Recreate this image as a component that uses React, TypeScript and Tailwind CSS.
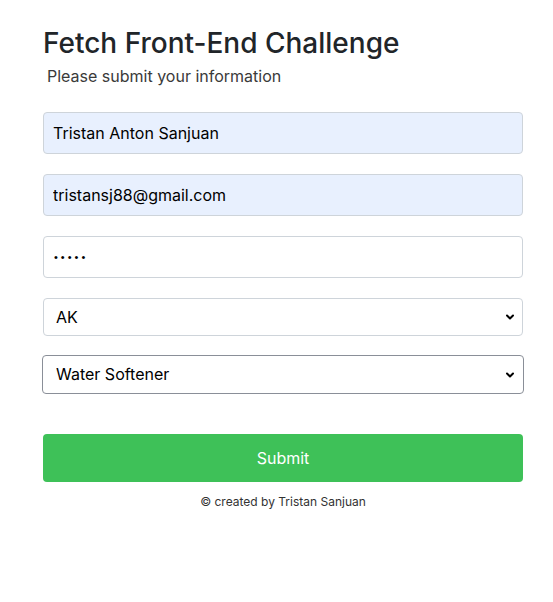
import { ChevronDown } from 'lucide-react';

export default function App() {
  return (
    <div className="min-h-[602px] bg-white font-['Inter',sans-serif] text-[#212529]">
      <div className="w-[480px] ml-[43px] pt-[27px]">
        <h1 className="text-[28px] leading-[1.2] font-medium">Fetch Front-End Challenge</h1>
        <p className="ml-[4px] mt-[3px] text-[16px] leading-[24px] text-[#3a3a3a]">Please submit your information</p>

        <form className="mt-[24px] flex flex-col">
          <input
            type="text"
            defaultValue="Tristan Anton Sanjuan"
            className="h-[42px] w-full rounded-[4px] border border-[#ced4da] bg-[#e8f0fe] px-[9px] text-[16px] text-black outline-none"
          />
          <input
            type="email"
            defaultValue="tristansj88@gmail.com"
            className="mt-[20px] h-[42px] w-full rounded-[4px] border border-[#ced4da] bg-[#e8f0fe] px-[9px] text-[16px] text-black outline-none"
          />
          <input
            type="password"
            defaultValue="12345"
            className="mt-[20px] h-[42px] w-full rounded-[4px] border border-[#ced4da] bg-white px-[10px] font-['Liberation_Sans',sans-serif] text-[11px] tracking-[3px] text-black outline-none"
          />
          <div className="relative mt-[20px]">
            <select
              defaultValue="AK"
              className="h-[38px] w-full appearance-none rounded-[4px] border border-[#ced4da] bg-white px-[12px] text-[16px] text-black outline-none"
            >
              <option>AK</option>
            </select>
            <ChevronDown className="pointer-events-none absolute right-[7px] top-[13px] h-[12px] w-[12px] text-black" strokeWidth={4} />
          </div>
          <div className="relative ml-[-1px] mr-[-1px] mt-[19px]">
            <select
              defaultValue="Water Softener"
              className="h-[39px] w-full appearance-none rounded-[4px] border border-[#8a8f98] bg-white px-[13px] text-[16px] text-black outline-none"
            >
              <option>Water Softener</option>
            </select>
            <ChevronDown className="pointer-events-none absolute right-[8px] top-[14px] h-[12px] w-[12px] text-black" strokeWidth={4} />
          </div>
          <button
            type="button"
            className="mt-[40px] h-[48px] w-full rounded-[4px] bg-[#3ec158] text-[16px] text-white"
          >
            Submit
          </button>
        </form>
        <p className="mt-[12px] text-center text-[12px] leading-[16px] text-[#333]">© created by Tristan Sanjuan</p>
      </div>
    </div>
  );
}
